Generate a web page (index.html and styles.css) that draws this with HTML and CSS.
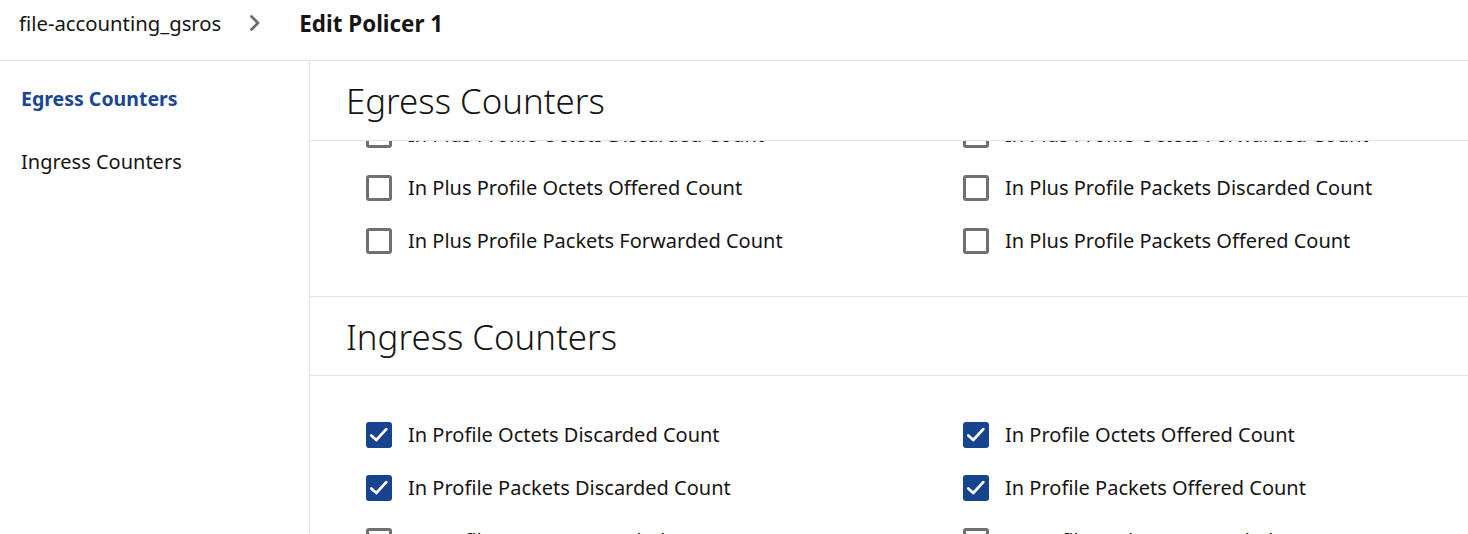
FILE: index.html
```html
<!DOCTYPE html>
<html lang="en">
<head>
<meta charset="utf-8">
<title>Edit Policer 1</title>
<link rel="stylesheet" href="styles.css">
</head>
<body>
<header class="topbar">
  <span class="crumb">file-accounting_gsros</span>
  <svg class="chev" width="14" height="18" viewBox="0 0 14 18"><path d="M3.5 2.5 L10 9 L3.5 15.5" fill="none" stroke="#6f6f6f" stroke-width="2.8" stroke-linecap="round" stroke-linejoin="round"/></svg>
  <span class="title">Edit Policer 1</span>
</header>
<div class="layout">
  <nav class="sidebar">
    <a class="nav-item active">Egress Counters</a>
    <a class="nav-item">Ingress Counters</a>
  </nav>
  <main class="main">
    <section class="section">
      <h2 class="section-title">Egress Counters</h2>
      <div class="section-body clipped">
        <div class="grid shifted">
          <label class="check"><span class="box"></span>In Plus Profile Octets Discarded Count</label>
          <label class="check"><span class="box"></span>In Plus Profile Octets Forwarded Count</label>
          <label class="check"><span class="box"></span>In Plus Profile Octets Offered Count</label>
          <label class="check"><span class="box"></span>In Plus Profile Packets Discarded Count</label>
          <label class="check"><span class="box"></span>In Plus Profile Packets Forwarded Count</label>
          <label class="check"><span class="box"></span>In Plus Profile Packets Offered Count</label>
        </div>
      </div>
    </section>
    <section class="section ingress">
      <h2 class="section-title">Ingress Counters</h2>
      <div class="section-body top-pad">
        <div class="grid">
          <label class="check"><span class="box on"><svg width="22" height="22" viewBox="0 0 22 22"><path d="M2.5 11.5 L8 16.5 L19 4.5" fill="none" stroke="#fff" stroke-width="3" stroke-linecap="round" stroke-linejoin="round"/></svg></span>In Profile Octets Discarded Count</label>
          <label class="check"><span class="box on"><svg width="22" height="22" viewBox="0 0 22 22"><path d="M2.5 11.5 L8 16.5 L19 4.5" fill="none" stroke="#fff" stroke-width="3" stroke-linecap="round" stroke-linejoin="round"/></svg></span>In Profile Octets Offered Count</label>
          <label class="check"><span class="box on"><svg width="22" height="22" viewBox="0 0 22 22"><path d="M2.5 11.5 L8 16.5 L19 4.5" fill="none" stroke="#fff" stroke-width="3" stroke-linecap="round" stroke-linejoin="round"/></svg></span>In Profile Packets Discarded Count</label>
          <label class="check"><span class="box on"><svg width="22" height="22" viewBox="0 0 22 22"><path d="M2.5 11.5 L8 16.5 L19 4.5" fill="none" stroke="#fff" stroke-width="3" stroke-linecap="round" stroke-linejoin="round"/></svg></span>In Profile Packets Offered Count</label>
          <label class="check"><span class="box"></span>In Profile Octets Forwarded Count</label>
          <label class="check"><span class="box"></span>In Profile Packets Forwarded Count</label>
        </div>
      </div>
    </section>
  </main>
</div>
</body>
</html>
```

FILE: styles.css
```css
* { box-sizing: border-box; }
html, body { margin: 0; padding: 0; height: 100%; overflow: hidden; }
body {
  font-family: "Noto Sans", "Open Sans", sans-serif;
  color: #161513;
  background: #fff;
}
.topbar {
  height: 61px;
  border-bottom: 1px solid #e4e4e4;
  display: flex;
  align-items: center;
  padding: 0 0 14px 19px;
}
.crumb { font-size: 20.3px; }
.chev { margin: 0 0 0 27px; flex: none; }
.title { font-size: 22.4px; font-weight: 700; margin-left: 37px; }
.layout { display: flex; height: calc(100% - 61px); }
.sidebar {
  width: 310px;
  flex: none;
  border-right: 1px solid #e4e4e4;
  display: flex;
  flex-direction: column;
  padding-top: 23px;
}
.nav-item {
  font-size: 20px;
  height: 63px;
  padding-left: 21px;
  line-height: 30px;
}
.nav-item.active { color: #1a4694; font-weight: 700; font-size: 19.5px; }
.main { flex: 1; overflow: hidden; }
.section-title {
  margin: 0;
  height: 80px;
  border-bottom: 1px solid #e4e4e4;
  display: flex;
  align-items: center;
  padding-left: 36px;
  font-size: 34.8px;
  font-weight: 300;
}
.ingress { border-top: 1px solid #e4e4e4; }
.ingress .section-title { height: 79px; }
.clipped { overflow: hidden; height: 155px; }
.shifted { margin-top: -33px; }
.top-pad { padding-top: 32px; }
.grid {
  display: grid;
  grid-template-columns: 597px 1fr;
  padding-left: 56px;
}
.check {
  height: 53px;
  display: flex;
  align-items: center;
  gap: 16px;
  font-size: 20px;
}
.box {
  width: 26px;
  height: 26px;
  flex: none;
  border: 3px solid #707070;
  border-radius: 3px;
  display: flex;
  align-items: center;
  justify-content: center;
}
.box.on { background: #17438f; border-color: #17438f; }
```
